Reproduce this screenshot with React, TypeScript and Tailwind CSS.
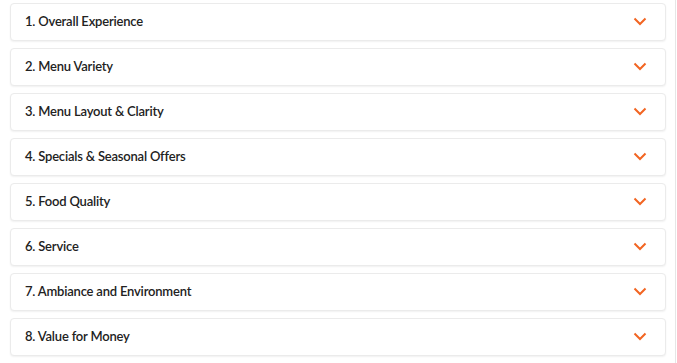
const items = [
  "1. Overall Experience",
  "2. Menu Variety",
  "3. Menu Layout & Clarity",
  "4. Specials & Seasonal Offers",
  "5. Food Quality",
  "6. Service",
  "7. Ambiance and Environment",
  "8. Value for Money",
];

const Chevron = () => (
  <svg width="14" height="9" viewBox="0 0 14 9" fill="none">
    <path d="M1.5 1.5 L7 7 L12.5 1.5" stroke="#f26522" strokeWidth="2" />
  </svg>
);

export default function App() {
  return (
    <div className="min-h-[363px] w-[676px] border-r border-[#e6e6e6] bg-white pl-[10px] pt-[3px] font-['Lato',sans-serif]">
      <div className="flex w-[656px] flex-col gap-[7px]">
        {items.map((label) => (
          <div
            key={label}
            className="flex h-[38px] items-center justify-between rounded-[4px] border border-[#ebebeb] bg-white pb-[1px] pl-[14px] pr-[18px] shadow-[0_1px_2px_rgba(0,0,0,0.06)]"
          >
            <span className="text-[13px] font-semibold tracking-[-0.2px] text-[#222]">{label}</span>
            <Chevron />
          </div>
        ))}
      </div>
    </div>
  );
}
